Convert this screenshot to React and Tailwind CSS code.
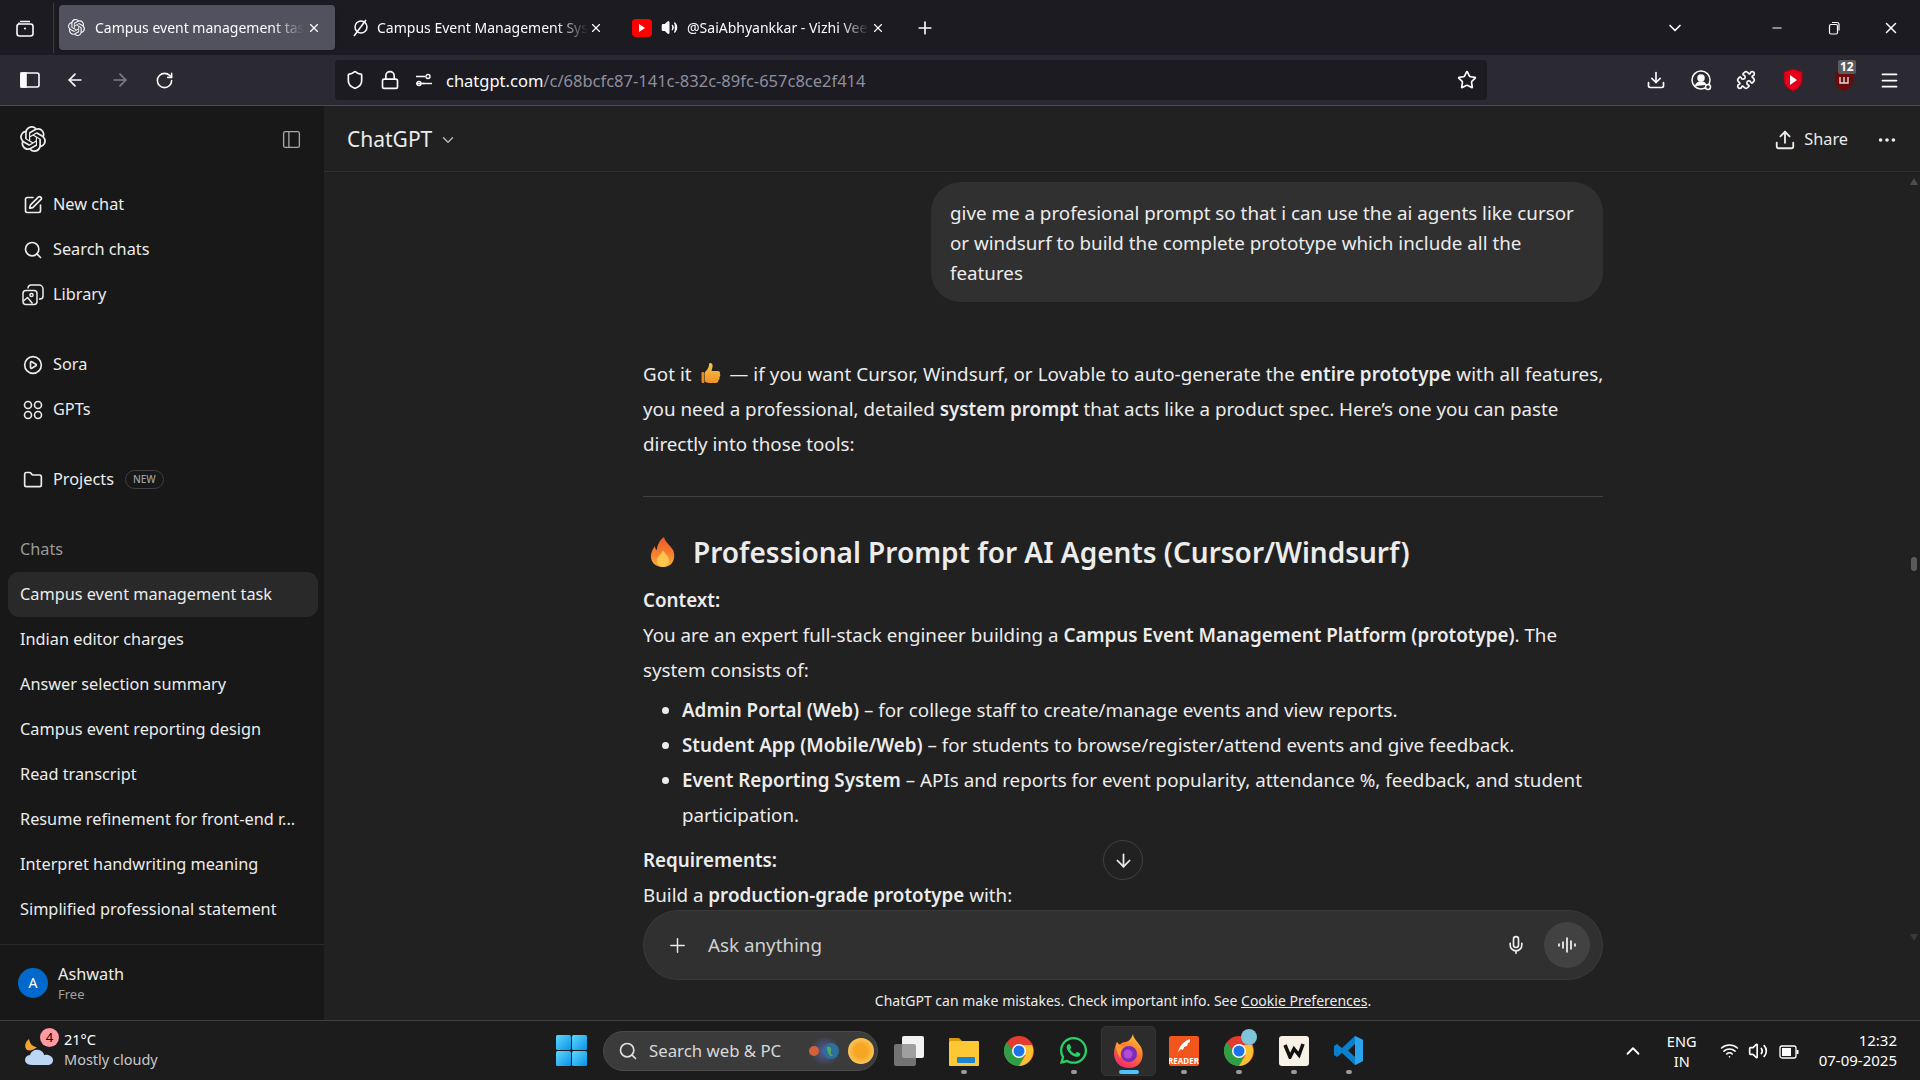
import React from "react";
import {
  ArrowDown,
  ArrowLeft,
  ArrowRight,
  ChevronDown,
  ChevronUp,
  CirclePlay,
  Download,
  Ellipsis,
  Folder,
  Lock,
  Menu,
  Mic,
  Minus,
  PanelLeft,
  Plus,
  Puzzle,
  RotateCw,
  Search,
  Shield,
  SquarePen,
  Star,
  Upload,
  Volume2,
  Wifi,
  X,
} from "lucide-react";
import { SiOpenai } from "react-icons/si";
import { FaWhatsapp } from "react-icons/fa";

const FONT = "font-['Noto_Sans','Open_Sans',sans-serif]";

const chats = [
  "Campus event management task",
  "Indian editor charges",
  "Answer selection summary",
  "Campus event reporting design",
  "Read transcript",
  "Resume refinement for front-end r...",
  "Interpret handwriting meaning",
  "Simplified professional statement",
];

function LibraryIcon() {
  return (
    <svg width="22" height="22" viewBox="0 0 22 22" fill="none" stroke="#ececec" strokeWidth="1.5" strokeLinejoin="round">
      <rect x="1" y="6.5" width="14" height="14" rx="3" />
      <path d="M6 4.5V4a3 3 0 0 1 3-3h8a4 4 0 0 1 4 4v7a3 3 0 0 1-3 3h-1" />
      <circle cx="9.5" cy="11" r="1.6" />
      <path d="M1.5 17l4-3.5 5 6" />
    </svg>
  );
}

function GptsIcon() {
  return (
    <svg width="20" height="20" viewBox="0 0 20 20" fill="none" stroke="#ececec" strokeWidth="1.6">
      <circle cx="5" cy="5" r="3.5" />
      <circle cx="15" cy="5" r="3.5" />
      <circle cx="5" cy="15" r="3.5" />
      <circle cx="15" cy="15" r="3.5" />
    </svg>
  );
}

function NavRow({ icon, label, children }) {
  return (
    <div className="h-[45px] mx-2 px-3 flex items-center gap-2 text-[16.3px] text-[#ececec]">
      <span className="w-[25px] flex justify-center shrink-0">{icon}</span>
      <span>{label}</span>
      {children}
    </div>
  );
}

function Tab({ active, favicon, label, width, closeGap }) {
  return (
    <div
      className={`h-[45px] flex items-center pl-[9px] rounded-[4px] text-[14px] text-[#fbfbfe] shrink-0 ${width} ${
        active ? "bg-[#52525e] shadow" : ""
      }`}
    >
      {favicon}
      <span className="flex-1 overflow-hidden whitespace-nowrap [mask-image:linear-gradient(to_right,black_85%,transparent)]">
        {label}
      </span>
      <X size={14} className={`shrink-0 ${closeGap}`} />
    </div>
  );
}

function ThumbsUp() {
  return (
    <svg width="20" height="24" viewBox="0 0 20 24" className="inline-block align-[-5px] mx-[4px]">
      <defs>
        <linearGradient id="thumb" x1="0" y1="0" x2="0" y2="1">
          <stop offset="0" stopColor="#fcc44a" />
          <stop offset="1" stopColor="#ee9226" />
        </linearGradient>
      </defs>
      <path d="M9 1c2 0 3 1.500 2.500 4L10.500 9H17c2 0 2.500 2 1.800 3 .8 1 .6 2.500-.4 3.200.5 1.200 0 2.500-1 3 .2 1.800-1 2.800-2.400 2.800H8c-2 0-3-1-4-1.500V10c2-1.500 4-5 4-7 0-1 .2-2 1-2z" fill="url(#thumb)" />
      <rect x="0.500" y="10" width="3" height="11" rx="1.200" fill="#e98a20" />
    </svg>
  );
}

function Flame() {
  return (
    <svg width="26" height="30" viewBox="0 0 26 30">
      <defs>
        <linearGradient id="flame" x1="0" y1="0" x2="0" y2="1">
          <stop offset="0" stopColor="#ef5a2e" />
          <stop offset="0.6" stopColor="#f7822c" />
          <stop offset="1" stopColor="#fbb03b" />
        </linearGradient>
      </defs>
      <path d="M14 0c1 5 6 8 9 13 3 6 1 17-10 17S-1 21 2 14c1-2 2-4 3-5 0 2 .5 3 2 4C7 8 10 3 14 0z" fill="url(#flame)" />
      <path d="M13 13c1 3 6 6 6 11 0 3-3 6-6 6s-6-3-6-6c0-5 5-7 6-11z" fill="#fdc64f" />
    </svg>
  );
}

function WinLogo() {
  return (
    <svg width="31" height="31" viewBox="0 0 31 31">
      <defs>
        <linearGradient id="win" x1="0" y1="0" x2="1" y2="1">
          <stop offset="0" stopColor="#5fd8fb" />
          <stop offset="1" stopColor="#0a91e8" />
        </linearGradient>
      </defs>
      <rect x="0" y="0" width="15" height="15" rx="1.500" fill="url(#win)" />
      <rect x="16" y="0" width="15" height="15" rx="1.500" fill="url(#win)" />
      <rect x="0" y="16" width="15" height="15" rx="1.500" fill="url(#win)" />
      <rect x="16" y="16" width="15" height="15" rx="1.500" fill="url(#win)" />
    </svg>
  );
}

function ChromeIcon() {
  return (
    <svg width="30" height="30" viewBox="0 0 30 30">
      <circle cx="15" cy="15" r="15" fill="#e33b2e" />
      <path d="M15 15 2 22.500A15 15 0 0 0 15 30l7.500-2z" fill="#2f9e44" />
      <path d="M15 9h13a15 15 0 0 1-13 21l6.500-11z" fill="#fbc02d" />
      <path d="M2 22.500A15 15 0 0 1 3 6l6 9 6 7z" fill="#2f9e44" />
      <circle cx="15" cy="15" r="7" fill="#fff" />
      <circle cx="15" cy="15" r="5.500" fill="#1a73e8" />
    </svg>
  );
}

function FirefoxIcon() {
  return (
    <svg width="30" height="34" viewBox="0 0 30 34">
      <defs>
        <linearGradient id="ff" x1="0.800" y1="0" x2="0.300" y2="1">
          <stop offset="0" stopColor="#ffcf3a" />
          <stop offset="0.45" stopColor="#ff7a2c" />
          <stop offset="1" stopColor="#f0286e" />
        </linearGradient>
      </defs>
      <path d="M19 0c0 4 5 8 8 13 4 8 1 21-12 21S-2 23 1 13c.500-2 1-3 2-5 .5 1.500 1 3 2 3.500C7 9 9 8 12 8c3-1 6-4 7-8z" fill="url(#ff)" />
      <circle cx="15" cy="20" r="8" fill="#7b2bb8" />
      <circle cx="14" cy="20" r="4.500" fill="#b14cd6" />
      <path d="M3 8c-2 6 0 12 4 16-1-5 0-9 4-12-3 0-6-1-8-4z" fill="#ff9a2e" />
    </svg>
  );
}

function ReaderIcon() {
  return (
    <div className="w-[30px] h-[30px] bg-[#f2561d] rounded-[2px] flex flex-col items-center justify-end overflow-hidden">
      <svg width="18" height="18" viewBox="0 0 18 18" fill="#fff">
        <path d="M15 1C9 3 5 7 3 14l3-3 2 1 1-3 3-1 1-3 2-1z" />
      </svg>
      <span className="text-[8px] font-bold leading-[10px] text-white">READER</span>
    </div>
  );
}

function Planets() {
  return (
    <svg width="68" height="36" viewBox="0 0 68 36">
      <defs>
        <radialGradient id="sun">
          <stop offset="0.5" stopColor="#f5a623" />
          <stop offset="1" stopColor="#fcc65a" />
        </radialGradient>
        <radialGradient id="haze">
          <stop offset="0" stopColor="#5a6fd0" />
          <stop offset="1" stopColor="#3b3b3b" />
        </radialGradient>
      </defs>
      <circle cx="18" cy="18" r="15" fill="url(#haze)" opacity="0.7" />
      <circle cx="7" cy="18" r="5" fill="#d3613a" />
      <circle cx="24" cy="18" r="8" fill="#2b6f9c" />
      <path d="M20 14c3-1 5 1 4 4s1 4 2 5c-3 1-6-3-6-9z" fill="#5aa760" />
      <circle cx="54" cy="18" r="13" fill="url(#sun)" />
    </svg>
  );
}

function Slot({ dot, active, children }) {
  return (
    <div
      className={`relative w-[55px] h-[50px] flex items-center justify-center rounded-[5px] ${
        active ? "bg-[#2c2c2c] border border-[#343434]" : ""
      }`}
    >
      {children}
      {dot && <span className="absolute bottom-[2px] left-1/2 -translate-x-1/2 w-[6px] h-[4px] rounded-full bg-[#9a9a9a]" />}
      {active && <span className="absolute bottom-[1px] left-1/2 -translate-x-1/2 w-[20px] h-[4px] rounded-full bg-[#4cc2ff]" />}
    </div>
  );
}

export default function App() {
  return (
    <div className={`h-screen w-full flex flex-col overflow-hidden bg-[#212121] ${FONT}`}>
      {/* tab strip */}
      <div className="h-[55px] bg-[#1c1b22] flex items-center shrink-0">
        <div className="w-[54px] h-[50px] flex items-center justify-center border-r border-[#3a3a42] text-[#fbfbfe]">
          <svg width="20" height="20" viewBox="0 0 20 20" fill="none" stroke="currentColor" strokeWidth="1.600" className="-ml-[4px]">
            <rect x="2" y="6" width="16" height="12" rx="2.500" />
            <path d="M5 3.500h10M4 6V4.500" />
            <circle cx="10" cy="10.500" r="1" fill="currentColor" stroke="none" />
          </svg>
        </div>
        <div className="flex items-center pl-[5px] gap-[6px]">
          <Tab
            active
            width="w-[276px]"
            closeGap="mr-[14px] ml-[3px]"
            label="Campus event management task"
            favicon={<SiOpenai size={17} className="mr-[10px] shrink-0" />}
          />
          <Tab
            width="w-[275px]"
            closeGap="mr-[13px] ml-[1px]"
            label="Campus Event Management System"
            favicon={
              <svg width="18" height="18" viewBox="0 0 18 18" fill="none" stroke="#fbfbfe" strokeWidth="1.500" className="mr-[8px] ml-[1px] shrink-0">
                <ellipse cx="10" cy="8" rx="6" ry="6" />
                <path d="M15 1 3 17" />
              </svg>
            }
          />
          <Tab
            width="w-[298px]"
            closeGap="mr-[35px] ml-[2px]"
            label="@SaiAbhyankkar - Vizhi Veekura"
            favicon={
              <>
                <div className="ml-[1px] w-[20px] h-[18px] rounded-[4px] bg-[#f00] flex items-center justify-center shrink-0">
                  <div className="w-0 h-0 border-y-[4px] border-y-transparent border-l-[6px] border-l-white" />
                </div>
                <Volume2 size={17} fill="#fbfbfe" className="mx-[9px] shrink-0" />
              </>
            }
          />
        </div>
        <Plus size={20} className="text-[#fbfbfe] -ml-[5px] shrink-0" />
        <div className="flex-1" />
        <ChevronDown size={20} className="text-[#fbfbfe]" />
        <div className="w-[85px]" />
        <Minus size={14} className="text-[#fbfbfe]" />
        <div className="w-[43px]" />
        <svg width="14" height="14" viewBox="0 0 14 14" fill="none" stroke="#fbfbfe" strokeWidth="1.200">
          <rect x="2.500" y="3.500" width="8" height="9.500" rx="1.500" />
          <path d="M5 1.500h5a2 2 0 0 1 2 2v6" />
        </svg>
        <div className="w-[41px]" />
        <X size={18} className="text-[#fbfbfe]" />
        <div className="w-[20px]" />
      </div>

      {/* toolbar */}
      <div className="h-[51px] bg-[#2b2a33] border-b border-[#4a4a50] flex items-center shrink-0 text-[#fbfbfe]">
        <div className="w-[335px] flex items-center pl-[20px] gap-[25px] shrink-0">
          <svg width="20" height="16" viewBox="0 0 20 16" fill="none" stroke="currentColor" strokeWidth="1.600">
            <rect x="1" y="1" width="18" height="14" rx="2" />
            <rect x="1" y="1" width="5" height="14" fill="currentColor" />
          </svg>
          <ArrowLeft size={20} />
          <ArrowRight size={20} className="opacity-40" />
          <RotateCw size={19} />
        </div>
        <div className="w-[1152px] h-[40px] bg-[#1c1b22] rounded-[4px] flex items-center pl-[10px] pr-[10px] gap-[15px] shrink-0">
          <Shield size={20} />
          <Lock size={20} />
          <svg width="18" height="14" viewBox="0 0 18 14" fill="none" stroke="currentColor" strokeWidth="1.400" className="ml-[0px]">
            <path d="M1 3.500h9M1 10.500h9" />
            <circle cx="13" cy="3.500" r="2" />
            <circle cx="4" cy="10.500" r="2" />
            <path d="M8 10.500h9" />
          </svg>
          <span className="flex-1 -ml-[2px] pt-[2px] text-[16.500px] text-[#fbfbfe]">
            chatgpt.com<span className="text-[#8f8f9d]">/c/68bcfc87-141c-832c-89fc-657c8ce2f414</span>
          </span>
          <Star size={20} />
        </div>
        <div className="flex-1 flex items-center justify-end pr-[20px]">
          <Download size={20} />
          <div className="ml-[25px]">
            <svg width="21" height="21" viewBox="0 0 21 21" fill="none" stroke="currentColor" strokeWidth="1.500" className="block">
              <circle cx="10" cy="10" r="9" />
              <circle cx="10" cy="8" r="3" fill="currentColor" />
              <path d="M4.500 16c1-3 3-4 5.500-4s4 1 5 3" fill="currentColor" />
              <circle cx="17" cy="17" r="2.500" fill="#2b2a33" />
            </svg>
          </div>
          <Puzzle size={20} className="ml-[24px]" />
          <svg width="22" height="24" viewBox="0 0 22 24" className="ml-[26px]">
            <path d="M11 1l9 3v8c0 5-4 9-9 11C6 21 2 17 2 12V4z" fill="#e3001b" stroke="#a70012" />
            <path d="M8 7l7 5-7 5z" fill="#fff" />
          </svg>
          <div className="relative ml-[29px]">
            <svg width="22" height="24" viewBox="0 0 22 24" className="block">
              <path d="M11 1l9 3v8c0 5-4 9-9 11C6 21 2 17 2 12V4z" fill="#6b0a0a" />
              <path d="M7 9v6h8V9M11 9v6" stroke="#ddd" strokeWidth="1.400" fill="none" />
            </svg>
            <span className="absolute -top-[8px] left-[5px] bg-[#5b5b5b] text-white text-[12px] leading-[14px] font-bold px-[2px] rounded-[2px]">
              12
            </span>
          </div>
          <Menu size={21} className="ml-[24px]" />
        </div>
      </div>

      {/* chat app */}
      <div className="flex-1 flex min-h-0">
        <aside className="w-[324px] shrink-0 bg-[#181818] flex flex-col">
          <div className="h-[66px] flex items-center justify-between pl-[20px] pr-[22px] shrink-0">
            <SiOpenai size={26} className="text-[#ececec]" />
            <PanelLeft size={21} className="text-[#a8a8a8]" strokeWidth={1.500} />
          </div>
          <div className="pt-[10px]">
            <NavRow icon={<SquarePen size={20} />} label="New chat" />
            <NavRow icon={<Search size={20} />} label="Search chats" />
            <NavRow icon={<LibraryIcon />} label="Library" />
          </div>
          <div className="pt-[25px]">
            <NavRow icon={<CirclePlay size={20} />} label="Sora" />
            <NavRow icon={<GptsIcon />} label="GPTs" />
          </div>
          <div className="pt-[25px]">
            <NavRow icon={<Folder size={20} />} label="Projects">
              <span className="ml-[3px] h-[19px] px-[7px] rounded-full border border-[#3f3f3f] text-[10px] leading-[17px] font-medium text-[#a0a0a0]">
                NEW
              </span>
            </NavRow>
          </div>
          <div className="mt-[25px] h-[45px] px-5 flex items-center text-[16.300px] text-[#9a9a9a]">Chats</div>
          <div>
            {chats.map((c, i) => (
              <div
                key={c}
                className={`h-[45px] ml-2 mr-[6px] px-3 flex items-center rounded-[11px] text-[16.300px] text-[#ececec] whitespace-nowrap ${
                  i === 0 ? "bg-[#292929]" : ""
                }`}
              >
                {c}
              </div>
            ))}
          </div>
          <div className="mt-auto h-[76px] border-t border-[#2a2a2a] flex items-center pl-[18px] gap-[10px]">
            <div className="w-[30px] h-[30px] rounded-full bg-[#0169cc] flex items-center justify-center text-white text-[14px]">A</div>
            <div className="flex flex-col">
              <span className="text-[16.300px] leading-[22px] text-[#ececec]">Ashwath</span>
              <span className="text-[13px] leading-[18px] text-[#a0a0a0]">Free</span>
            </div>
          </div>
        </aside>

        <main className="relative flex-1 min-w-0 flex flex-col">
          <header className="h-[66px] shrink-0 border-b border-[#2f2f2f] flex items-center pl-[23px] pr-[22px] pt-[2px]">
            <span className="text-[21px] text-[#ececec]">ChatGPT</span>
            <ChevronDown size={18} className="ml-[7px] text-[#b4b4b4]" />
            <div className="flex-1" />
            <Upload size={22} className="text-[#ececec]" />
            <span className="ml-[8px] text-[16.300px] text-[#ececec]">Share</span>
            <Ellipsis size={22} className="ml-[28px] text-[#ececec]" />
          </header>

          <div className="relative flex-1 min-h-0 overflow-hidden">
            <div className="w-[960px] ml-[319px] pt-[10px] text-[18.800px] leading-[35px] text-[#ececec]">
              <div className="flex justify-end">
                <div className="w-[672px] h-[120px] rounded-[30px] bg-[#303030] px-[19px] py-[16px] leading-[30px] whitespace-nowrap">
                  give me a profesional prompt so that i can use the ai agents like cursor
                  <br />
                  or windsurf to build the complete prototype which include all the
                  <br />
                  features
                </div>
              </div>
              <p className="mt-[55px] whitespace-nowrap">
                <span className="tracking-[0.06px]">
                  Got it <ThumbsUp /> — if you want Cursor, Windsurf, or Lovable to auto-generate the <b className="font-semibold">entire prototype</b> with all features,
                </span>
                <br />
                you need a professional, detailed <b className="font-semibold">system prompt</b> that acts like a product spec. Here’s one you can paste
                <br />
                directly into those tools:
              </p>
              <hr className="mt-[34px] border-t border-[#414141]" />
              <h2 className="mt-[35px] mb-[11px] h-[40px] flex items-center text-[28px] leading-[40px] font-semibold text-[#ececec] whitespace-nowrap">
                <span className="ml-[7px] mr-[17px]">
                  <Flame />
                </span>
                Professional Prompt for AI Agents (Cursor/Windsurf)
              </h2>
              <p className="font-semibold">Context:</p>
              <p className="whitespace-nowrap">
                You are an expert full-stack engineer building a <b className="font-semibold">Campus Event Management Platform (prototype)</b>. The
                <br />
                system consists of:
              </p>
              <ul className="list-disc pl-[39px] mt-[5px] whitespace-nowrap">
                <li>
                  <b className="font-semibold">Admin Portal (Web)</b> – for college staff to create/manage events and view reports.
                </li>
                <li>
                  <b className="font-semibold">Student App (Mobile/Web)</b> – for students to browse/register/attend events and give feedback.
                </li>
                <li>
                  <b className="font-semibold">Event Reporting System</b> – APIs and reports for event popularity, attendance %, feedback, and student
                  <br />
                  participation.
                </li>
              </ul>
              <p className="mt-[10px] font-semibold">Requirements:</p>
              <p className="whitespace-nowrap">
                Build a <b className="font-semibold">production-grade prototype</b> with:
              </p>
            </div>
            <div className="absolute bottom-[30px] left-[779px] w-[40px] h-[40px] rounded-full bg-[#212121] border border-[#414141] flex items-center justify-center text-[#ececec]">
              <ArrowDown size={21} />
            </div>
          </div>

          <div className="shrink-0 w-[960px] ml-[319px]">
            <div className="h-[70px] rounded-full bg-[#303030] border border-[#3a3a3a] flex items-center pl-[22px] pr-[12px]">
              <Plus size={23} className="text-[#ececec]" strokeWidth={1.500} />
              <span className="ml-[19px] flex-1 text-[18.800px] text-[#d0d0d0]">Ask anything</span>
              <Mic size={20} className="text-[#ececec]" />
              <div className="ml-[18px] w-[46px] h-[46px] rounded-full bg-[#424242] flex items-center justify-center">
                <svg width="18" height="16" viewBox="0 0 18 16" stroke="#fff" strokeWidth="1.600" strokeLinecap="round">
                  <path d="M1 7v2M5 5v6M9 1v14M13 4v8M17 7v2" />
                </svg>
              </div>
            </div>
            <div className="h-[40px] flex items-center justify-center text-[14px] text-[#ececec]">
              ChatGPT can make mistakes. Check important info. See&nbsp;<span className="underline">Cookie Preferences</span>.
            </div>
          </div>

          {/* overlay scrollbar */}
          <div className="absolute right-0 top-[66px] bottom-0 w-[12px] text-[#4d4d4d]">
            <div className="absolute top-[6px] right-[2px] w-0 h-0 border-x-[4px] border-x-transparent border-b-[7px] border-b-[#4d4d4d]" />
            <div className="absolute top-[385px] right-[3px] w-[6px] h-[14px] rounded-[3px] bg-[#5a5a5a]" />
            <div className="absolute bottom-[79px] right-[2px] w-0 h-0 border-x-[4px] border-x-transparent border-t-[7px] border-t-[#3a3a3a]" />
          </div>
        </main>
      </div>

      {/* windows taskbar */}
      <div className="h-[60px] shrink-0 bg-[#1c1c1c] border-t border-[#3f3f3f] flex items-center text-white">
        <div className="relative w-[556px] h-full flex items-center pl-[24px] shrink-0">
          <svg width="32" height="32" viewBox="0 0 32 32">
            <path d="M5 4c-4 3-5 8-2 11 3 1 7 0 10-3-3 0-7-2-8-8z" fill="#f2a530" />
            <path d="M8 30c-5 0-7-3-7-5s2-5 5-5c1-4 5-6 9-5 3 .7 5 3 5 5 5-1 9 2 9 5s-2 5-6 5z" fill="#bcd6f5" />
          </svg>
          <span className="absolute left-[40px] top-[7px] w-[19px] h-[19px] rounded-full bg-[#ff99a4] text-black text-[13px] leading-[19px] text-center">
            4
          </span>
          <div className="ml-[8px] pb-[4px] flex flex-col">
            <span className="text-[14.500px] leading-[20px]">21°C</span>
            <span className="text-[14.500px] leading-[20px] text-[#c8c8c8]">Mostly cloudy</span>
          </div>
        </div>
        <WinLogo />
        <div className="ml-[16px] w-[275px] h-[40px] rounded-full bg-[#3b3b3b] border border-[#4a4a4a] flex items-center pl-[14px] pr-[2px] shrink-0">
          <Search size={20} className="text-[#e0e0e0]" />
          <span className="ml-[11px] flex-1 text-[16.800px] text-[#d8d8d8] whitespace-nowrap">Search web &amp; PC</span>
          <Planets />
        </div>
        <div className="ml-[3px] flex items-center shrink-0">
          <Slot>
            <div className="relative w-[30px] h-[30px]">
              <div className="absolute right-0 top-0 w-[22px] h-[22px] rounded-[2px] bg-[#f2f2f2]" />
              <div className="absolute left-0 bottom-0 w-[22px] h-[22px] rounded-[2px] bg-[#8a8a8a]/80" />
            </div>
          </Slot>
          <Slot dot>
            <svg width="30" height="30" viewBox="0 0 30 30">
              <path d="M0 3a1 1 0 0 1 1-1h9l3 3H0z" fill="#d99a10" />
              <rect x="0" y="5" width="30" height="25" rx="1" fill="#fcc935" />
              <rect x="8" y="21" width="18" height="6" rx="1" fill="#1a84d6" />
            </svg>
          </Slot>
          <Slot>
            <ChromeIcon />
          </Slot>
          <Slot dot>
            <FaWhatsapp size={31} className="text-[#25d366]" />
          </Slot>
          <Slot active>
            <FirefoxIcon />
          </Slot>
          <Slot dot>
            <ReaderIcon />
          </Slot>
          <Slot dot>
            <div className="relative">
              <ChromeIcon />
              <span className="absolute -top-[7px] -right-[3px] w-[16px] h-[16px] rounded-full bg-[#7fc4d8]" />
            </div>
          </Slot>
          <Slot dot>
            <div className="w-[30px] h-[30px] rounded-[3px] bg-[#f7f1e6] flex items-center justify-center">
              <svg width="22" height="16" viewBox="0 0 22 16" fill="none" stroke="#111" strokeWidth="3.500">
                <path d="M2 2l5 12 4-8 5 6 4-11" />
              </svg>
            </div>
          </Slot>
          <Slot dot>
            <svg width="31" height="31" viewBox="0 0 31 31">
              <path d="M22 1l8 4v21l-8 4L9 18l-5 4-3-2v-9l3-2 5 4z" fill="#0a7fcb" />
              <path d="M22 1l8 4v21l-8 4z" fill="#2ba3ec" />
              <path d="M22 9l-7 6.500 7 6.500z" fill="#1c1c1c" />
            </svg>
          </Slot>
        </div>
        <div className="flex-1" />
        <ChevronUp size={22} className="shrink-0" />
        <div className="ml-[13px] w-[50px] flex flex-col items-center text-[14.500px] leading-[20px] shrink-0">
          <span>ENG</span>
          <span>IN</span>
        </div>
        <Wifi size={19} className="ml-[13px] shrink-0" />
        <Volume2 size={20} className="ml-[9px] shrink-0" />
        <svg width="20" height="16" viewBox="0 0 20 16" fill="none" stroke="#fff" strokeWidth="1.300" className="ml-[11px] shrink-0">
          <rect x="1" y="3" width="16" height="12" rx="2" />
          <rect x="3" y="5" width="9" height="8" fill="#fff" stroke="none" />
          <path d="M18.500 7v4" strokeWidth="2" />
        </svg>
        <div className="ml-[20px] mr-[23px] pb-[2px] flex flex-col items-end text-[15px] leading-[20px] shrink-0">
          <span>12:32</span>
          <span>07-09-2025</span>
        </div>
      </div>
    </div>
  );
}
